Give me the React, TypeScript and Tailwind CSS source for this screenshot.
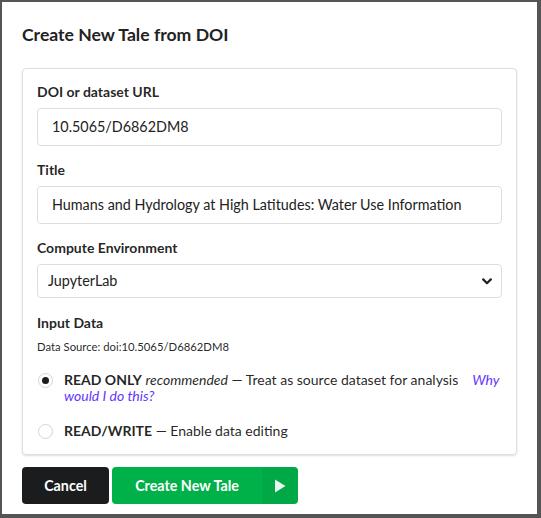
import React from 'react'

function Radio({ checked }: { checked?: boolean }) {
  return (
    <span className="mt-[1px] flex h-[15px] w-[15px] shrink-0 items-center justify-center rounded-full border border-[#d4d4d5] bg-white">
      {checked && <span className="h-[7px] w-[7px] rounded-full bg-[#1b1c1d]" />}
    </span>
  )
}

export default function App() {
  return (
    <div className="h-[518px] w-[541px] bg-[#555555] pb-[4px] pl-[2px] pr-[4px] pt-[2px] font-['Lato','Open_Sans',sans-serif] text-[14px] text-[rgba(0,0,0,0.87)]">
      <div className="h-[512px] bg-white px-[20px] pt-[22px]">
        <h1 className="text-[17.6px] font-bold leading-[22px] text-[#222]">Create New Tale from DOI</h1>

        <div className="mt-[22px] rounded-[4px] border border-[#dededf] px-[14px] pb-[15px] pt-[14px] shadow-[0_1px_2px_0_rgba(34,36,38,0.15)]">
          <label className="block text-[14px] font-bold leading-[18px]">DOI or dataset URL</label>
          <div className="mt-[7px] flex h-[38px] items-center rounded-[4px] border border-[#dededf] px-[14px] text-[14.35px] text-[#222]">
            10.5065/D6862DM8
          </div>

          <label className="mt-[15px] block text-[14px] font-bold leading-[18px]">Title</label>
          <div className="mt-[7px] flex h-[38px] items-center rounded-[4px] border border-[#dededf] px-[14px] text-[14.35px] text-[#222]">
            Humans and Hydrology at High Latitudes: Water Use Information
          </div>

          <label className="mt-[15px] block text-[14px] font-bold leading-[18px]">Compute Environment</label>
          <div className="mt-[7px] flex h-[34px] items-center justify-between rounded-[4px] border border-[#dededf] pl-[10px] pr-[9px] text-[14.35px] text-[#222]">
            <span>JupyterLab</span>
            <svg width="10" height="7" viewBox="0 0 10 7" fill="none">
              <path d="M1.2 1.4 L5 5.2 L8.8 1.4" stroke="#222" strokeWidth="2.2" strokeLinecap="round" strokeLinejoin="round" />
            </svg>
          </div>

          <label className="mt-[16px] block text-[14px] font-bold leading-[18px]">Input Data</label>
          <p className="mt-[8px] text-[11.3px] leading-[14px]">Data Source: doi:10.5065/D6862DM8</p>

          <div className="mt-[18px] flex gap-[11px] pl-[1px]">
            <Radio checked />
            <p className="leading-[16px]">
              <b>READ ONLY</b> <i>recommended</i> — Treat as source dataset for analysis
              <a className="ml-[14px] italic text-[#6435ff]">Why would I do this?</a>
            </p>
          </div>

          <div className="mt-[19px] flex gap-[11px] pl-[1px]">
            <Radio />
            <p className="leading-[16px]">
              <b>READ/WRITE</b> — Enable data editing
            </p>
          </div>
        </div>

        <div className="mt-[12px] flex gap-[3px]">
          <button className="h-[37px] w-[87px] rounded-[4px] bg-[#1b1c1d] text-[14.3px] font-bold text-white">
            Cancel
          </button>
          <button className="flex h-[37px] w-[186px] overflow-hidden rounded-[4px] bg-[#00b14a] text-[14.3px] font-bold text-white">
            <span className="flex flex-1 items-center justify-center">Create New Tale</span>
            <span className="flex w-[36px] items-center justify-center bg-[rgba(0,0,0,0.05)]">
              <svg width="12" height="14" viewBox="0 0 12 14">
                <path d="M1 0.5 L11.5 7 L1 13.5 Z" fill="#e6f7ec" />
              </svg>
            </span>
          </button>
        </div>
      </div>
    </div>
  )
}
